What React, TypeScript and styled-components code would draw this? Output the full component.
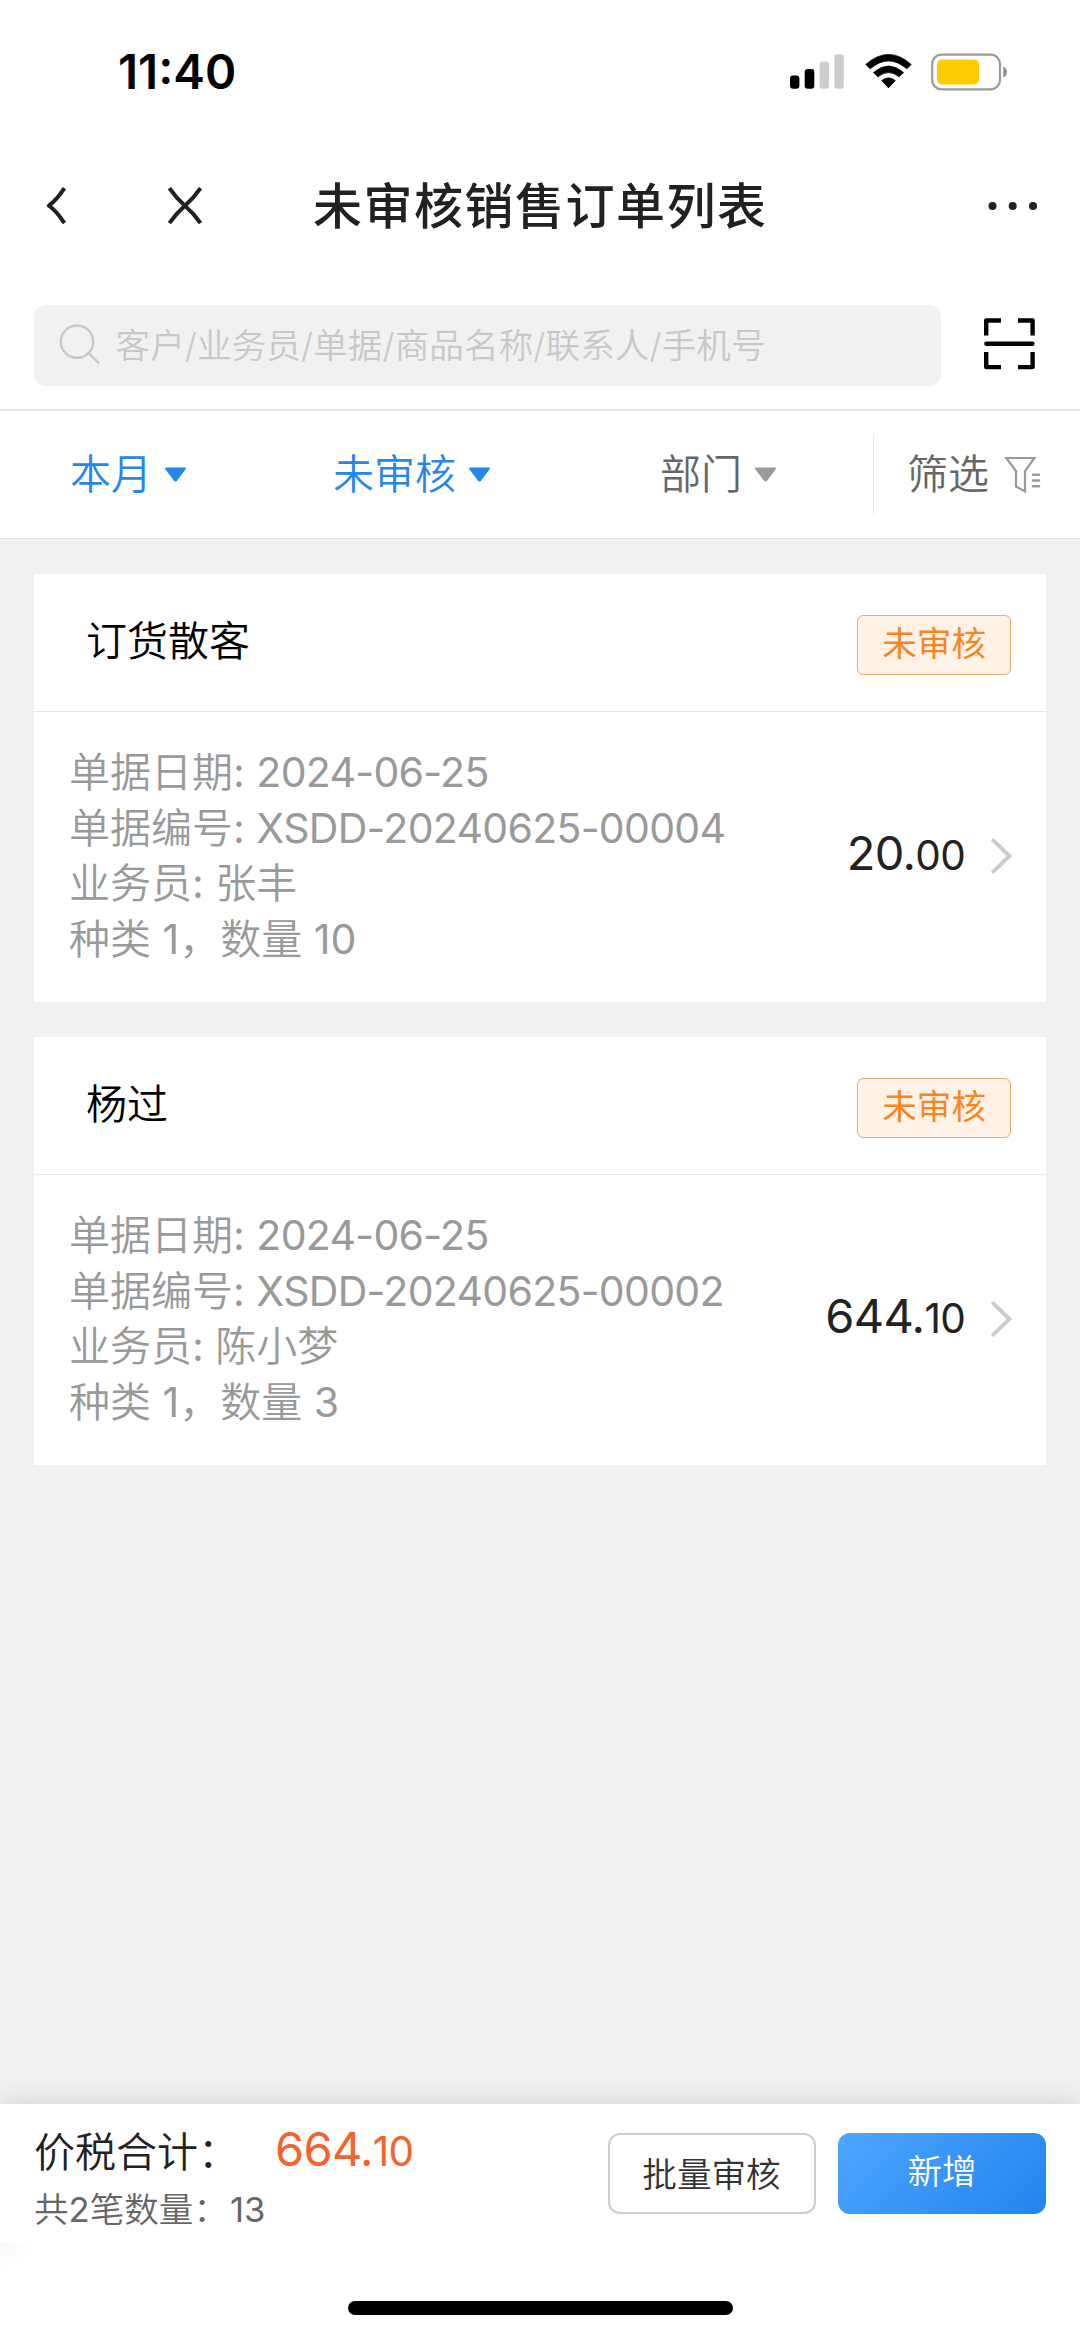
import React from "react";
import styled, { createGlobalStyle } from "styled-components";

const GlobalStyle = createGlobalStyle`
  * { box-sizing: border-box; }
  body {
    margin: 0;
    background: #fff;
    font-family: Inter, "Noto Sans CJK SC", sans-serif;
  }
`;

const Screen = styled.div`
  display: flex;
  flex-direction: column;
  width: 1080px;
  height: 2337px;
  background: #fff;
  overflow: hidden;
`;

const StatusBar = styled.header`
  display: flex;
  align-items: center;
  justify-content: space-between;
  height: 143px;
  padding: 0 72px 0 118px;
`;

const Clock = styled.time`
  font-size: 47.5px;
  font-weight: 600;
  line-height: 60px;
  color: #000;
`;

const StatusIcons = styled.div`
  display: flex;
  align-items: center;
  gap: 19.5px;
`;

const NavBar = styled.nav`
  display: grid;
  grid-template-columns: 313px minmax(0, 1fr) 316px;
  align-items: center;
  height: 126px;
  color: #202122;
`;

const NavLeft = styled.div`
  display: flex;
  align-items: center;
  gap: 98px;
  padding-left: 45px;
`;

const NavRight = styled.div`
  display: flex;
  justify-content: flex-end;
  padding-right: 42px;
`;

const Title = styled.h1`
  margin: 0;
  padding-top: 2px;
  font-size: 49px;
  font-weight: 500;
  line-height: 64px;
  letter-spacing: 1.5px;
  white-space: nowrap;
`;

const SearchRow = styled.div`
  display: flex;
  align-items: center;
  gap: 42px;
  height: 142px;
  padding: 36px 43px 23.5px 34px;
  border-bottom: 2px solid #e6e6e6;
`;

const SearchBox = styled.div`
  display: flex;
  align-items: center;
  gap: 13.5px;
  width: 907px;
  height: 80.5px;
  padding-left: 24px;
  border-radius: 12px;
  background: #f1f1f1;
`;

const Placeholder = styled.span`
  font-size: 34.6px;
  font-weight: 350;
  line-height: 48px;
  letter-spacing: 0.1px;
  color: #c8c8c8;
  white-space: nowrap;
`;

const FilterBar = styled.div`
  display: flex;
  align-items: center;
  height: 128px;
  border-bottom: 1px solid #e2e2e2;
`;

const FilterItem = styled.div<{ $width: number; $active?: boolean }>`
  display: flex;
  align-items: center;
  gap: 12px;
  width: ${(p) => p.$width}px;
  font-size: 41px;
  font-weight: 350;
  line-height: 56px;
  color: ${(p) => (p.$active ? "#2686ec" : "#666")};
  white-space: nowrap;
`;

const FilterLabel = styled.span`
  padding-bottom: 1px;
`;

const FilterGroup = styled.div`
  display: flex;
  width: 873px;
  padding-left: 70px;
`;

const FilterMore = styled.div`
  display: flex;
  align-items: center;
  gap: 15px;
  height: 81px;
  padding-left: 33px;
  border-left: 1.5px solid #e8e8e8;
  font-size: 41px;
  font-weight: 350;
  line-height: 56px;
  color: #666;
`;

const List = styled.main`
  flex: 1;
  display: flex;
  flex-direction: column;
  gap: 35px;
  padding: 34.5px 34px;
  background: #f1f1f1;
`;

const Card = styled.article`
  height: 428px;
  background: #fff;
`;

const CardHeader = styled.div`
  display: flex;
  align-items: center;
  justify-content: space-between;
  height: 138.5px;
  padding: 0 35px 0 52px;
  border-bottom: 1px solid #e8e8e8;
`;

const Customer = styled.h2`
  margin: 0 0 3px;
  font-size: 41px;
  font-weight: 350;
  line-height: 56px;
  color: #000;
`;

const Tag = styled.span`
  height: 60px;
  margin-top: 6px;
  padding: 0 24px;
  border: 1px solid #eeaa6c;
  border-radius: 6px;
  background: #fef1e6;
  font-size: 34.6px;
  line-height: 54px;
  color: #f98521;
`;

const CardBody = styled.div`
  display: flex;
  align-items: center;
  justify-content: space-between;
  height: 289.5px;
  padding: 0 34px 0 35px;
`;

const Details = styled.div`
  display: flex;
  flex-direction: column;
  padding-bottom: 1px;
  font-size: 41px;
  font-weight: 350;
  line-height: 55.4px;
  color: #999;
`;

const Line = styled.div`
  white-space: pre;
`;

const Latin = styled.span`
  font-weight: 400;
  letter-spacing: -0.7px;
`;

const Plain = styled.span`
  font-weight: 400;
`;

const AmountCell = styled.div`
  display: flex;
  align-items: center;
  gap: 26px;
`;

const Amount = styled.span<{ $color: string }>`
  padding-bottom: 4px;
  font-size: 47px;
  font-weight: 400;
  line-height: 56px;
  letter-spacing: -0.7px;
  color: ${(p) => p.$color};
`;

const Cents = styled.small`
  font-size: 40.5px;
`;

const Footer = styled.footer`
  position: relative;
  display: flex;
  align-items: flex-start;
  height: 139px;
  padding: 29px 34px 0;
  background: #fff;
  box-shadow: 0 0 28px rgba(0, 0, 0, 0.14);
`;

const Summary = styled.div`
  flex: 1;
`;

const TotalRow = styled.div`
  display: flex;
  align-items: center;
  height: 42px;
  margin-top: -2px;
  font-size: 41px;
  font-weight: 350;
  line-height: 56px;
  color: #222;
`;

const TotalLabel = styled.span`
  width: 241px;
`;

const CountRow = styled.div`
  margin-top: 12px;
  font-size: 34.6px;
  font-weight: 350;
  line-height: 48px;
  color: #666;
`;

const Quantity = styled.span`
  margin-left: 2px;
  font-weight: 400;
`;

const Button = styled.button<{ $primary?: boolean }>`
  width: 208px;
  height: 81px;
  margin-left: ${(p) => (p.$primary ? 22.5 : 0)}px;
  padding: 0 0 ${(p) => (p.$primary ? 5 : 0)}px;
  border: ${(p) => (p.$primary ? "0" : "2px solid #ccc")};
  border-radius: 12px;
  background: ${(p) => (p.$primary ? "linear-gradient(135deg, #4fa6fe, #2184ee)" : "#fff")};
  color: ${(p) => (p.$primary ? "#fff" : "#333")};
  font: 350 34.6px/48px Inter, "Noto Sans CJK SC", sans-serif;
`;

const HomeArea = styled.div`
  position: relative;
  display: flex;
  justify-content: center;
  align-items: flex-start;
  height: 94px;
  padding-top: 58px;
  background: radial-gradient(ellipse 38px 28px at 0 0, #f8f8f8, #fff);
`;

const HomeIndicator = styled.div`
  width: 385px;
  height: 14px;
  border-radius: 7px;
  background: #000;
`;

const SignalIcon = () => (
  <svg width="54" height="37" viewBox="790 53 54 37">
    <rect x="790" y="75.6" width="9.4" height="13.2" rx="3" fill="#000" />
    <rect x="804.7" y="69" width="9.6" height="19.8" rx="3" fill="#000" />
    <rect x="819.6" y="61.6" width="9.4" height="27.2" rx="3" fill="#ccc" />
    <rect x="834.4" y="54.2" width="9.4" height="34.6" rx="3" fill="#ccc" />
  </svg>
);

const WifiIcon = () => (
  <svg width="48" height="37" viewBox="863 53 48 37">
    <path d="M864.8 64.4 Q887.5 44.4 910.2 64.4 L905.8 68.8 Q887.5 53 869.2 68.8 Z" strokeWidth="0.8" stroke="#000" strokeLinejoin="round" />
    <path d="M872.5 72.6 Q887.5 59.4 902.5 72.6 L898 76.8 Q887.5 68.4 877 76.8 Z" strokeWidth="0.8" stroke="#000" strokeLinejoin="round" />
    <path d="M880.8 80.6 Q887.5 75.4 894.2 80.6 L887.5 87.8 Z" stroke="#000" strokeLinejoin="round" />
  </svg>
);

const BatteryIcon = () => (
  <svg width="77" height="38" viewBox="931 52.5 77 38">
    <rect x="932.2" y="54.1" width="67.8" height="34.8" rx="9.5" fill="#fff" stroke="#9b9b9b" strokeWidth="2.2" />
    <rect x="937" y="59" width="42" height="25" rx="5" fill="#ffcc00" />
    <path d="M1003.2 66 Q1007 67.5 1007 71.5 Q1007 75.5 1003.2 77 Z" fill="#8f8f8f" />
  </svg>
);

const BackIcon = () => (
  <svg width="23" height="42" viewBox="45 185 23 42" fill="none" stroke="currentColor" strokeWidth="4">
    <path d="M64.4 188.2 Q56 201 48.8 205.7 Q56 210.4 64.4 223.2" strokeLinejoin="round" />
  </svg>
);

const CloseIcon = () => (
  <svg width="38" height="42" viewBox="166 185 38 42" fill="none" stroke="currentColor" strokeWidth="4">
    <path d="M169.4 188.2 Q176 198 184.9 205.7 Q194 213.5 200.5 223.2 M200.5 188.2 Q194 198 184.9 205.7 Q176 213.5 169.4 223.2" />
  </svg>
);

const MoreIcon = () => (
  <svg width="50" height="12" viewBox="988 200 50 12" fill="currentColor">
    <circle cx="992.5" cy="206" r="4" />
    <circle cx="1012.7" cy="206" r="4" />
    <circle cx="1033" cy="206" r="4" />
  </svg>
);

const SearchIcon = () => (
  <svg width="44" height="44" viewBox="58 323.5 44 44" fill="none" stroke="#c8c8c8" strokeWidth="2.4" strokeLinecap="round">
    <circle cx="77" cy="342.2" r="16.2" />
    <path d="M88.5 353.6 L98.3 363.2" />
  </svg>
);

const ScanIcon = () => (
  <svg width="53" height="54" viewBox="983 318.5 53 54" fill="none" stroke="#000" strokeWidth="4.4" strokeLinejoin="round">
    <path d="M986.2 336 V321 H1001 M1018 321 H1032.6 V336 M986.2 352.6 V367.6 H1001 M1018 367.6 H1032.6 V352.6" />
    <path d="M986.4 344.2 H1032.4" strokeLinecap="round" />
  </svg>
);

const Caret = ({ color }: { color: string }) => (
  <svg width="23" height="15" viewBox="0 0 23 15">
    <path d="M2 1.5 H21 L12.4 13 Q11.5 14 10.6 13 Z" fill={color} stroke={color} strokeWidth="2" strokeLinejoin="round" />
  </svg>
);

const FunnelIcon = () => (
  <svg width="37" height="38" viewBox="1003 455.5 37 38" fill="none" stroke="#999" strokeWidth="2.2">
    <path d="M1005.4 457.5 H1033.4 L1024 470.5 V491 L1015 486 V470.5 Z" />
    <path d="M1032 474.2 H1038 M1032 480 H1038 M1032 485.8 H1038" strokeWidth="2.6" strokeLinecap="round" />
  </svg>
);

const ChevronIcon = () => (
  <svg width="21" height="38" viewBox="0 0 21 38" fill="none" stroke="#ccc" strokeWidth="4" strokeLinecap="round">
    <path d="M2.3 2.4 L18.3 18 L2.3 33.6" />
  </svg>
);

interface Order {
  customer: string;
  date: string;
  code: string;
  clerk: string;
  kinds: number;
  quantity: number;
  amount: string;
}

const orders: Order[] = [
  { customer: "订货散客", date: "2024-06-25", code: "XSDD-20240625-00004", clerk: "张丰", kinds: 1, quantity: 10, amount: "20.00" },
  { customer: "杨过", date: "2024-06-25", code: "XSDD-20240625-00002", clerk: "陈小梦", kinds: 1, quantity: 3, amount: "644.10" },
];

const Money = ({ value, color }: { value: string; color: string }) => {
  const [whole, cents] = value.split(".");
  return (
    <Amount $color={color}>
      {whole}.<Cents>{cents}</Cents>
    </Amount>
  );
};

const OrderCard = ({ order }: { order: Order }) => (
  <Card>
    <CardHeader>
      <Customer>{order.customer}</Customer>
      <Tag>未审核</Tag>
    </CardHeader>
    <CardBody>
      <Details>
        <Line>单据日期<Plain>: </Plain><Latin>{order.date}</Latin></Line>
        <Line>单据编号<Plain>: </Plain><Latin>{order.code}</Latin></Line>
        <Line>业务员<Plain>: </Plain>{order.clerk}</Line>
        <Line>种类<Plain> {order.kinds}</Plain>，数量<Plain> {order.quantity}</Plain></Line>
      </Details>
      <AmountCell>
        <Money value={order.amount} color="#222" />
        <ChevronIcon />
      </AmountCell>
    </CardBody>
  </Card>
);

export default function App() {
  return (
    <>
      <GlobalStyle />
      <Screen>
        <StatusBar>
          <Clock>11:40</Clock>
          <StatusIcons>
            <SignalIcon />
            <WifiIcon />
            <BatteryIcon />
          </StatusIcons>
        </StatusBar>
        <NavBar>
          <NavLeft>
            <BackIcon />
            <CloseIcon />
          </NavLeft>
          <Title>未审核销售订单列表</Title>
          <NavRight>
            <MoreIcon />
          </NavRight>
        </NavBar>
        <SearchRow>
          <SearchBox>
            <SearchIcon />
            <Placeholder>客户/业务员/单据/商品名称/联系人/手机号</Placeholder>
          </SearchBox>
          <ScanIcon />
        </SearchRow>
        <FilterBar>
          <FilterGroup>
            <FilterItem $width={263} $active>
              <FilterLabel>本月</FilterLabel>
              <Caret color="#2686ec" />
            </FilterItem>
            <FilterItem $width={327} $active>
              <FilterLabel>未审核</FilterLabel>
              <Caret color="#2686ec" />
            </FilterItem>
            <FilterItem $width={200}>
              <FilterLabel>部门</FilterLabel>
              <Caret color="#999" />
            </FilterItem>
          </FilterGroup>
          <FilterMore>
            <FilterLabel>筛选</FilterLabel>
            <FunnelIcon />
          </FilterMore>
        </FilterBar>
        <List>
          {orders.map((order) => (
            <OrderCard key={order.code} order={order} />
          ))}
        </List>
        <Footer>
          <Summary>
            <TotalRow>
              <TotalLabel>价税合计：</TotalLabel>
              <Money value="664.10" color="#f5622a" />
            </TotalRow>
            <CountRow>共<Plain>2</Plain>笔数量：<Quantity>13</Quantity></CountRow>
          </Summary>
          <Button>批量审核</Button>
          <Button $primary>新增</Button>
        </Footer>
        <HomeArea>
          <HomeIndicator />
        </HomeArea>
      </Screen>
    </>
  );
}
